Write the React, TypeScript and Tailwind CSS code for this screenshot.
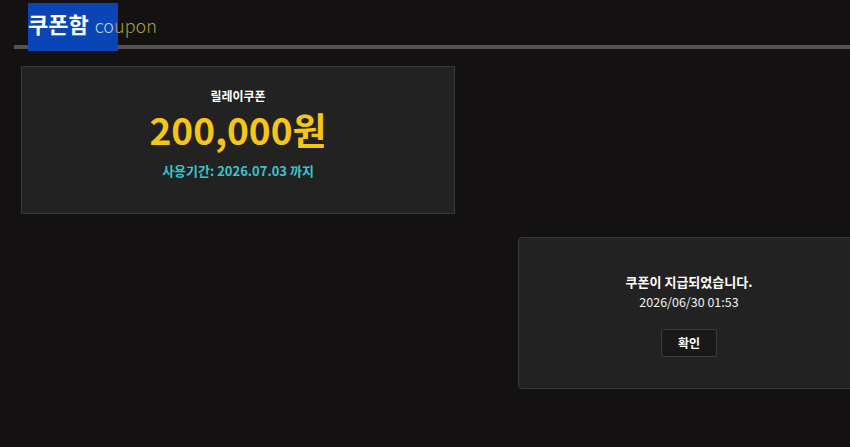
import React from 'react'

const font = { fontFamily: '"Noto Sans CJK KR", "Noto Sans", sans-serif' }

const App = (): React.JSX.Element => {
  return (
    <div className="relative w-[850px] h-[447px] overflow-hidden bg-[#141113]" style={font}>
      {/* header */}
      <div className="relative">
        <div className="absolute left-[28px] top-[3px] w-[90px] h-[48px] bg-[#0a45b8]" />
        <div className="ml-[14px] h-[49px] border-b-4 border-[#565355] pl-[14px]">
          <div className="relative flex items-baseline gap-[6px] pt-[10px]">
            <span className="text-[22px] font-bold leading-[26px] text-white">쿠폰함</span>
            <span className="text-[18px] font-light leading-[26px]">
              <span className="text-[#b9cff0]">co</span>
              <span className="text-[#a6a23e]">upon</span>
            </span>
          </div>
        </div>
      </div>

      {/* coupon card */}
      <div className="ml-[21px] mt-[17px] w-[434px] h-[148px] border border-[#3a3839] bg-[#232223] flex flex-col items-center pt-[20px]">
        <div className="text-[12px] font-bold leading-[18px] text-white">릴레이쿠폰</div>
        <div className="mt-[4px] text-[37px] font-bold leading-[40px] text-[#f7c514]">200,000원</div>
        <div className="mt-[13px] text-[13px] font-semibold leading-[18px] text-[#34c6cc]">사용기간: 2026.07.03 까지</div>
      </div>

      {/* notice dialog */}
      <div className="absolute left-[518px] top-[237px] w-[342px] h-[152px] rounded-[4px] border border-[#3a3839] bg-[#232223] flex flex-col items-center pt-[34px]">
        <div className="text-[13px] font-bold leading-[19px] text-white">쿠폰이 지급되었습니다.</div>
        <div className="mt-[1px] text-[12.5px] leading-[19px] text-[#f2f2f2]">2026/06/30 01:53</div>
        <button className="mt-[18px] w-[56px] h-[28px] rounded-[3px] border border-[#3d3b3c] bg-[#1a1819] text-[12px] font-bold text-white">
          확인
        </button>
      </div>
    </div>
  )
}

export default App
